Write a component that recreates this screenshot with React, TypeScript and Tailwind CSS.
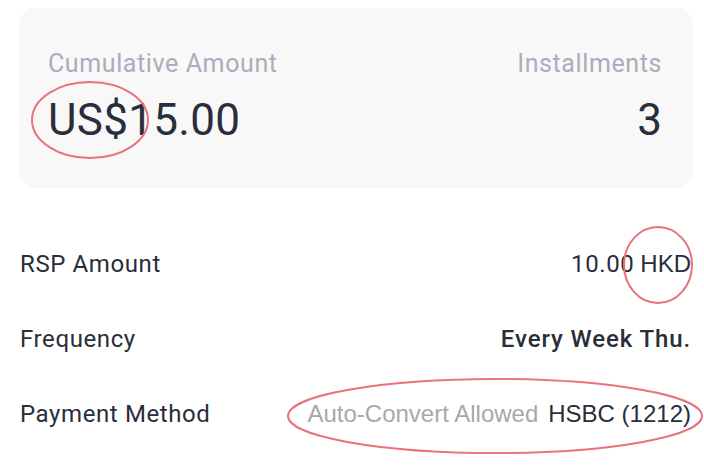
const din = "font-['Roboto','Noto_Sans',sans-serif]";
const arial = "font-['Liberation_Sans','Arial',sans-serif]";

type Row = { label: string; value: React.ReactNode };

const rows: Row[] = [
  {
    label: "RSP Amount",
    value: (
      <span className="inline-flex items-baseline gap-[6px]">
        <span className={`${din} tracking-[0.6px]`}>10.00</span>
        <span className={arial}>HKD</span>
      </span>
    ),
  },
  {
    label: "Frequency",
    value: <span className={`${din} font-medium tracking-[0.9px]`}>Every Week Thu.</span>,
  },
  {
    label: "Payment Method",
    value: (
      <span className={`${arial} inline-flex items-baseline gap-[10px]`}>
        <span className="text-[#a8a8a8]">Auto-Convert Allowed</span>
        <span>HSBC (1212)</span>
      </span>
    ),
  },
];

export default function App() {
  return (
    <div className="relative h-[468px] w-[704px] overflow-hidden bg-white text-[#2a2d3a]">
      <section className="ml-[19px] mr-[11px] mt-[8px] flex h-[180px] items-start justify-between rounded-[16px] bg-[#f8f8f8] pl-[29px] pr-[31px] pt-[40px]">
        <div>
          <p className={`${din} text-[25px] leading-[32px] tracking-[0.6px] text-[#a9adbc]`}>Cumulative Amount</p>
          <p className={`${din} mt-[14px] text-[44px] leading-[52px] tracking-[0.3px]`}>US$15.00</p>
        </div>
        <div className="text-right">
          <p className={`${din} text-[25px] leading-[32px] tracking-[0.6px] text-[#a9adbc]`}>Installments</p>
          <p className={`${din} mt-[14px] text-[44px] leading-[52px]`}>3</p>
        </div>
      </section>

      <div className="mt-[38px] pl-[20px] pr-[13px]">
        {rows.map((r) => (
          <div key={r.label} className="flex h-[75px] items-center justify-between text-[24px]">
            <span className={`${din} tracking-[0.6px]`}>{r.label}</span>
            <span className="text-[#2a2d3a]">{r.value}</span>
          </div>
        ))}
      </div>

      <svg className="pointer-events-none absolute inset-0" width="704" height="468" aria-hidden>
        <g fill="none" stroke="#e8737d" strokeWidth="2">
          <ellipse cx="90" cy="120" rx="58" ry="38" />
          <ellipse cx="658" cy="265" rx="34" ry="38" />
          <ellipse cx="495" cy="416" rx="207" ry="37" />
        </g>
      </svg>
    </div>
  );
}
